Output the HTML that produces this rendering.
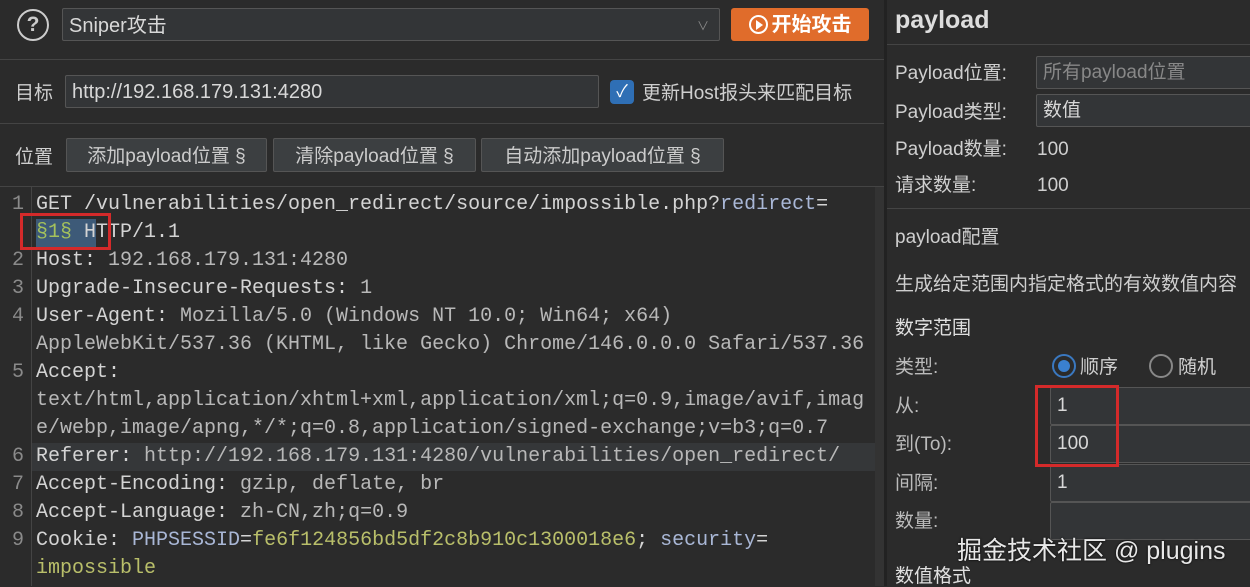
<!DOCTYPE html>
<html><head><meta charset="utf-8"><style>
*{box-sizing:border-box;margin:0;padding:0}
body{width:1250px;height:586px;background:#2b2b2b;overflow:hidden;position:relative;font-family:"Liberation Sans","Noto Sans CJK SC",sans-serif;color:#d0d0d0}
.abs{position:absolute}
.sep{position:absolute;height:1px;background:#444}
.inp{position:absolute;background:#333537;border:1px solid #555;border-radius:2px;color:#d8d8d8;font-size:19px;line-height:20px;padding-left:6px;display:flex;align-items:center}
.btn{position:absolute;background:#3c3f41;border:1px solid #555;border-radius:2px;color:#ccc;font-size:19px;line-height:20px;display:flex;align-items:center;justify-content:center;height:34px;top:138px;padding-top:3px}
.code{position:absolute;left:36px;top:191px;font-family:"Liberation Mono",monospace;font-size:20px;line-height:28px;color:#d4d4d4;white-space:pre}
.ln{position:absolute;left:12px;font-family:"Liberation Mono",monospace;font-size:20px;line-height:28px;color:#8a8a8a}
.k{color:#a9b7d6}.v{color:#b9bf6a}.g{color:#b8b8b8}
.r{position:absolute;font-size:19px;line-height:20px;color:#cfcfcf;white-space:nowrap;transform:translateY(2px)}
</style></head><body>
<div class="abs" style="left:17px;top:9px;width:32px;height:32px;border:2.5px solid #ccc;border-radius:50%;color:#ccc;font-size:21px;font-weight:bold;text-align:center;line-height:27px">?</div>
<div class="inp" style="left:62px;top:8px;width:658px;height:33px;font-size:20px;padding-top:3px">Sniper攻击<span style="position:absolute;right:10px;color:#888;font-size:12px">&#8744;</span></div>
<div class="abs" style="left:731px;top:8px;width:138px;height:33px;background:#e06c2b;border-radius:3px;color:#fff;font-size:20px;line-height:20px;font-weight:bold;display:flex;align-items:center;justify-content:center;gap:4px"><span style="display:inline-block;width:19px;height:19px;border:2px solid #fff;border-radius:50%;position:relative"><span style="position:absolute;left:5px;top:3px;border-left:7px solid #fff;border-top:5px solid transparent;border-bottom:5px solid transparent"></span></span>开始攻击</div>
<div class="sep" style="left:0;top:59px;width:884px"></div>
<div class="r" style="left:15px;top:82px">目标</div>
<div class="inp" style="left:65px;top:75px;width:534px;height:33px;font-size:20px">http://192.168.179.131:4280</div>
<div class="abs" style="left:610px;top:80px;width:24px;height:24px;background:#2f6fb5;border-radius:4px;color:#fff;font-size:17px;text-align:center;line-height:24px">✓</div>
<div class="r" style="left:642px;top:82px">更新Host报头来匹配目标</div>
<div class="sep" style="left:0;top:123px;width:884px"></div>
<div class="r" style="left:15px;top:146px">位置</div>
<div class="btn" style="left:66px;width:201px">添加payload位置 §</div>
<div class="btn" style="left:273px;width:203px">清除payload位置 §</div>
<div class="btn" style="left:481px;width:243px">自动添加payload位置 §</div>
<div class="sep" style="left:0;top:186px;width:884px"></div>
<div class="abs" style="left:31px;top:187px;width:1px;height:399px;background:#444"></div>
<div class="abs" style="left:32px;top:443px;width:843px;height:28px;background:#353739"></div>
<div class="abs" style="left:36px;top:219px;width:60px;height:28px;background:#3d5a78"></div>
<div class="abs" style="left:875px;top:187px;width:9px;height:399px;background:#333"></div>
<div class="ln" style="top:191px">1</div><div class="ln" style="top:247px">2</div><div class="ln" style="top:275px">3</div><div class="ln" style="top:303px">4</div><div class="ln" style="top:359px">5</div><div class="ln" style="top:443px">6</div><div class="ln" style="top:471px">7</div><div class="ln" style="top:499px">8</div><div class="ln" style="top:527px">9</div>
<div class="code">GET /vulnerabilities/open_redirect/source/impossible.php?<span class="k">redirect</span>=
<span style="color:#a5c25c">§1§</span> HTTP/1.1
Host: <span class="g">192.168.179.131:4280</span>
Upgrade-Insecure-Requests: <span class="g">1</span>
User-Agent: <span class="g">Mozilla/5.0 (Windows NT 10.0; Win64; x64)</span>
<span class="g">AppleWebKit/537.36 (KHTML, like Gecko) Chrome/146.0.0.0 Safari/537.36</span>
Accept:
<span class="g">text/html,application/xhtml+xml,application/xml;q=0.9,image/avif,imag</span>
<span class="g">e/webp,image/apng,*/*;q=0.8,application/signed-exchange;v=b3;q=0.7</span>
Referer: <span class="g">http://192.168.179.131:4280/vulnerabilities/open_redirect/</span>
Accept-Encoding: <span class="g">gzip, deflate, br</span>
Accept-Language: <span class="g">zh-CN,zh;q=0.9</span>
Cookie: <span class="k">PHPSESSID</span>=<span class="v">fe6f124856bd5df2c8b910c1300018e6</span>; <span class="k">security</span>=
<span class="v">impossible</span></div>
<div class="abs" style="left:20px;top:213px;width:91px;height:37px;border:3px solid #d42a2a"></div>
<div class="abs" style="left:884px;top:0;width:3px;height:586px;background:#222"></div>
<div class="abs" style="left:895px;top:6px;font-size:25px;line-height:28px;font-weight:bold;color:#ddd">payload</div>
<div class="sep" style="left:887px;top:44px;width:363px"></div>
<div class="r" style="left:895px;top:62px">Payload位置:</div>
<div class="inp" style="left:1036px;top:56px;width:230px;height:33px;color:#888">所有payload位置</div>
<div class="r" style="left:895px;top:101px">Payload类型:</div>
<div class="inp" style="left:1036px;top:94px;width:230px;height:33px">数值</div>
<div class="r" style="left:895px;top:138px">Payload数量:</div><div class="r" style="left:1037px;top:138px">100</div>
<div class="r" style="left:895px;top:174px">请求数量:</div><div class="r" style="left:1037px;top:174px">100</div>
<div class="sep" style="left:887px;top:208px;width:363px"></div>
<div class="r" style="left:895px;top:226px">payload配置</div>
<div class="r" style="left:895px;top:273px">生成给定范围内指定格式的有效数值内容</div>
<div class="r" style="left:895px;top:317px;color:#e0e0e0">数字范围</div>
<div class="r" style="left:895px;top:356px;color:#bbb">类型:</div>
<div class="abs" style="left:1052px;top:354px;width:24px;height:24px;border:2px solid #3a78c0;border-radius:50%;background:#2b2b2b"><div style="position:absolute;left:4px;top:4px;width:12px;height:12px;border-radius:50%;background:#3a80d0"></div></div>
<div class="r" style="left:1080px;top:356px">顺序</div>
<div class="abs" style="left:1149px;top:354px;width:24px;height:24px;border:2px solid #888;border-radius:50%"></div>
<div class="r" style="left:1178px;top:356px">随机</div>
<div class="r" style="left:895px;top:395px;color:#bbb">从:</div>
<div class="inp" style="left:1050px;top:387px;width:220px;height:38px">1</div>
<div class="r" style="left:895px;top:433px;color:#bbb">到(To):</div>
<div class="inp" style="left:1050px;top:425px;width:220px;height:38px">100</div>
<div class="r" style="left:895px;top:472px;color:#bbb">间隔:</div>
<div class="inp" style="left:1050px;top:464px;width:220px;height:38px">1</div>
<div class="r" style="left:895px;top:510px;color:#bbb">数量:</div>
<div class="inp" style="left:1050px;top:502px;width:220px;height:38px"></div>
<div class="r" style="left:895px;top:565px;color:#e0e0e0">数值格式</div>
<div class="abs" style="left:1035px;top:385px;width:84px;height:82px;border:3px solid #d42a2a"></div>
<div class="abs" style="left:957px;top:536px;font-size:25px;line-height:30px;color:#e8e8e8;white-space:nowrap;text-shadow:0 0 2px #000">掘金技术社区 @ plugins</div>
</body></html>
